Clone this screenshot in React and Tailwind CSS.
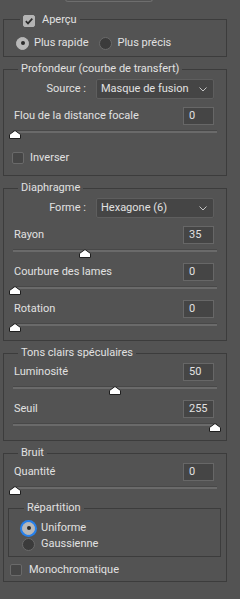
import React from "react";

const text = "text-[#e1e1e1]";

const Checkbox = ({ checked }) => (
  <span
    className={`flex items-center justify-center w-[12px] h-[12px] rounded-[2px] border ${
      checked ? "bg-[#b4b4b4] border-[#b4b4b4]" : "bg-[#464646] border-[#6a6a6a]"
    }`}
  >
    {checked && (
      <svg width="10" height="10" viewBox="0 0 10 10">
        <path d="M1.8 5.2L4 7.4L8.3 2.6" fill="none" stroke="#2b2b2b" strokeWidth="1.7" />
      </svg>
    )}
  </span>
);

const Radio = ({ checked, focus }) => (
  <span
    className={`flex items-center justify-center w-[13px] h-[13px] rounded-full border ${
      checked ? "bg-[#b8b8b8] border-[#b8b8b8]" : "bg-[#3b3b3b] border-[#6a6a6a]"
    } ${focus ? "ring-2 ring-[#2680eb]" : ""}`}
  >
    {checked && <span className="block w-[4px] h-[4px] rounded-full bg-[#2b2b2b]" />}
  </span>
);

const Select = ({ value }) => (
  <div className="flex items-center justify-between w-[118px] h-[20px] ml-[10px] pl-[4px] pr-[6px] bg-[#454545] border border-[#5e5e5e] rounded-[2px]">
    <span>{value}</span>
    <svg width="8" height="5" viewBox="0 0 8 5">
      <path d="M0.5 0.5L4 4L7.5 0.5" fill="none" stroke="#c4c4c4" strokeWidth="1" />
    </svg>
  </div>
);

const Slider = ({ value, max }) => (
  <div className="relative h-[10px] mt-[5px]">
    <div className="mt-[4px] ml-[9px] w-[204px] h-[3px] bg-[#6a6a6a] border-t border-[#484848]" />
    {/* poignée du curseur */}
    <svg
      className="absolute top-0"
      style={{ left: 5 + (value / max) * 200 }}
      width="12"
      height="9"
      viewBox="0 0 12 9"
    >
      <path d="M0.5 8.5V4.5L6 0.5L11.5 4.5V8.5Z" fill="#ffffff" stroke="#1e1e1e" />
    </svg>
  </div>
);

const ValueRow = ({ label, value, max, first }) => (
  <div className={first ? "" : "mt-[4px]"}>
    <div className="flex items-center justify-between h-[18px] pl-[10px] pr-[12px]">
      <span>{label}</span>
      <div className="flex items-center w-[31px] h-[18px] pl-[5px] bg-[#454545] border border-[#676767]">
        {value}
      </div>
    </div>
    <Slider value={value} max={max} />
  </div>
);

const Group = ({ legend, children, className = "" }) => (
  <fieldset className={`w-[224px] ml-[3px] border border-[#3c3c3c] ${className}`}>
    <legend className="ml-[14px] px-[3px] h-[16px] leading-[16px]">{legend}</legend>
    {children}
  </fieldset>
);

export default function App() {
  return (
    <div
      className={`w-[240px] h-[599px] overflow-hidden bg-[#535353] ${text} text-[11px] leading-[16px]`}
      style={{ fontFamily: 'Roboto, "Liberation Sans", sans-serif' }}
    >
      {/* bas du bouton coupé */}
      <div className="ml-[65px] w-[88px] h-[3px] -mt-[1px] border-x border-b border-[#6e6e6e] rounded-b-[4px]" />

      {/* Aperçu */}
      <fieldset className="w-[224px] ml-[3px] mt-[9px] border border-[#3c3c3c] pb-[5px]">
        <legend className="ml-[16px] px-[3px] h-[16px] flex items-center gap-[7px]">
          <span className="mt-[3px]">
            <Checkbox checked />
          </span>
          <span className="mt-[1px]">Aperçu</span>
        </legend>
        <div className="flex items-center h-[16px] mt-[8px] pl-[12px]">
          <Radio checked />
          <span className="ml-[5px]">Plus rapide</span>
          <span className="ml-[11px]">
            <Radio />
          </span>
          <span className="ml-[5px]">Plus précis</span>
        </div>
      </fieldset>

      <Group legend="Profondeur (courbe de transfert)" className="mt-[4px] pb-[11px]">
        <div className="flex items-center h-[20px] mt-[2px]">
          <span className="w-[82px] text-right">Source :</span>
          <Select value="Masque de fusion" />
        </div>
        <div className="mt-[8px]">
          <ValueRow label="Flou de la distance focale" value={0} max={100} first />
        </div>
        <div className="flex items-center gap-[6px] mt-[12px] pl-[8px] h-[12px]">
          <Checkbox />
          <span>Inverser</span>
        </div>
      </Group>

      <Group legend="Diaphragme" className="mt-[4px] pb-[7px]">
        <div className="flex items-center h-[20px] mt-[2px]">
          <span className="w-[82px] text-right">Forme :</span>
          <Select value="Hexagone (6)" />
        </div>
        <div className="mt-[8px]">
          <ValueRow label="Rayon" value={35} max={100} first />
          <ValueRow label="Courbure des lames" value={0} max={100} />
          <ValueRow label="Rotation" value={0} max={360} />
        </div>
      </Group>

      <Group legend="Tons clairs spéculaires" className="mt-[4px] pb-[7px]">
        <div className="mt-[2px]">
          <ValueRow label="Luminosité" value={50} max={100} first />
          <ValueRow label="Seuil" value={255} max={255} />
        </div>
      </Group>

      <Group legend="Bruit" className="mt-[4px] pb-[5px]">
        <div className="mt-[2px]">
          <ValueRow label="Quantité" value={0} max={100} first />
        </div>
        <fieldset className="ml-[4px] mt-[4px] w-[213px] border border-[#3c3c3c] pb-[4px]">
          <legend className="ml-[15px] px-[3px] h-[16px] leading-[16px]">Répartition</legend>
          <div className="mt-[4px] pl-[13px]">
            <div className="flex items-center h-[16px]">
              <Radio checked focus />
              <span className="ml-[6px]">Uniforme</span>
            </div>
            <div className="flex items-center h-[16px]">
              <Radio />
              <span className="ml-[6px]">Gaussienne</span>
            </div>
          </div>
        </fieldset>
        <div className="flex items-center gap-[7px] mt-[7px] pl-[6px] h-[12px]">
          <Checkbox />
          <span>Monochromatique</span>
        </div>
      </Group>
    </div>
  );
}
